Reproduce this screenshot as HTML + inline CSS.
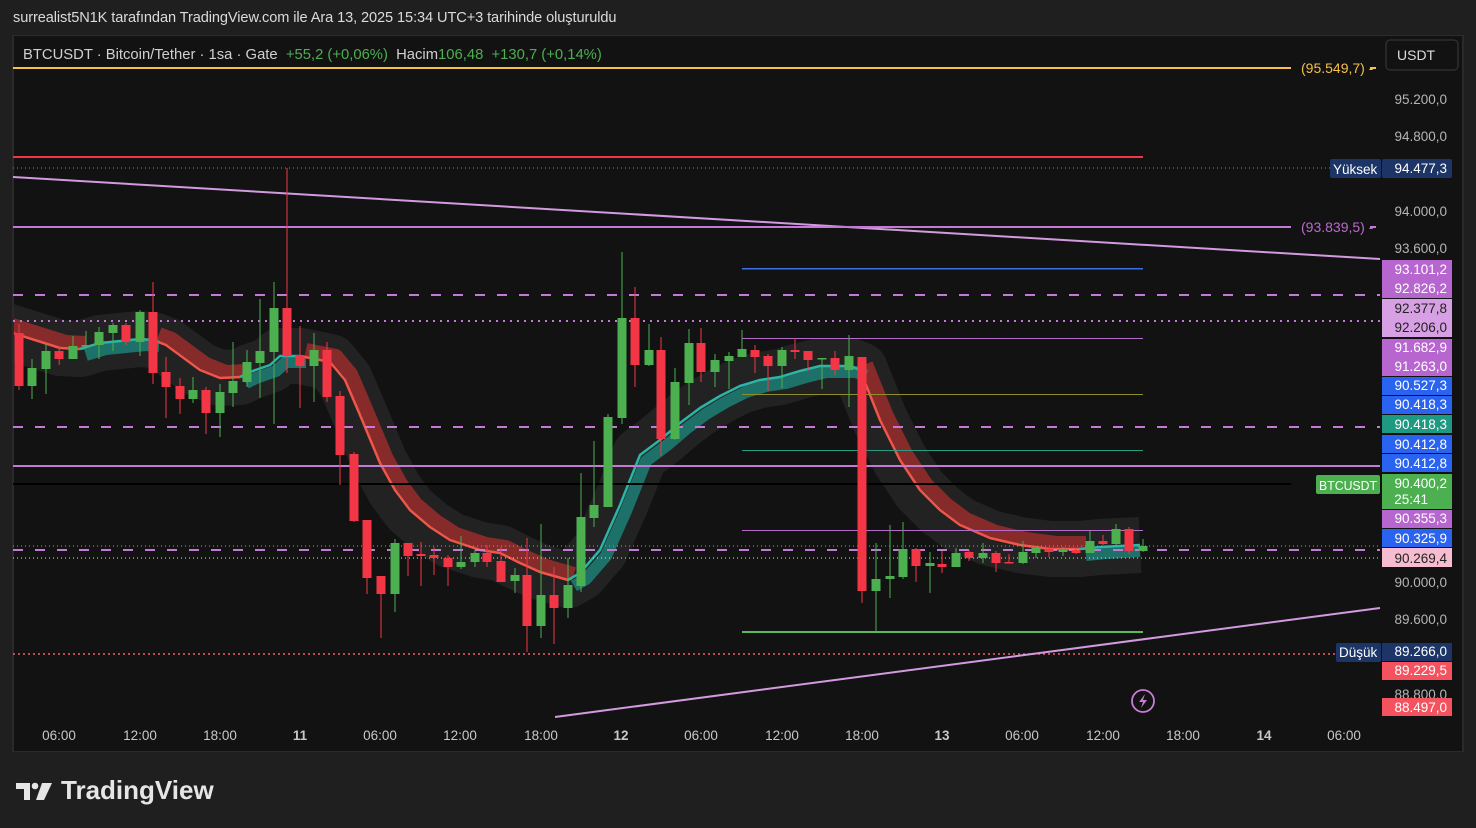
<!DOCTYPE html>
<html><head><meta charset="utf-8"><style>
html,body{margin:0;padding:0;background:#1f1f1f;width:1476px;height:828px;overflow:hidden;font-family:"Liberation Sans",sans-serif;}
.t{position:absolute;white-space:nowrap}
</style></head><body>
<div class="t" style="left:13px;top:10px;font-size:14.6px;color:#dbdbdb;letter-spacing:-0.1px">surrealist5N1K tarafından TradingView.com ile Ara 13, 2025 15:34 UTC+3 tarihinde oluşturuldu</div>
<svg width="1476" height="828" style="position:absolute;left:0;top:0" font-family="Liberation Sans, sans-serif">
<defs><clipPath id="cp"><rect x="14" y="36" width="1366" height="715"/></clipPath></defs>
<rect x="13" y="35" width="1450" height="717" fill="#121212"/>
<rect x="13" y="35" width="1450" height="1" fill="#2c2c2c"/>
<rect x="1462" y="35" width="2" height="717" fill="#2a2a2a"/>
<rect x="12" y="35" width="2" height="717" fill="#2a2a2a"/>
<rect x="13" y="751" width="1450" height="1" fill="#2a2a2a"/>
<g clip-path="url(#cp)">
<path d="M0 329 L60 348 L80 349 L100 343 L140 339 L153 340 L166 345 L200 370 L220 378 L240 377 L250 372 L270 365 L280 356 L300 356 L330 362 L345 380 L360 415 L380 463 L395 490 L410 510 L430 527 L450 540 L480 550 L500 553 L520 563 L540 572 L568 580 L580 573 L600 550 L620 505 L640 455 L660 440 L680 423 L700 408 L720 396 L740 386 L760 380 L780 377 L800 371 L820 366 L850 366 L860 370 L870 395 L880 420 L900 460 L920 490 L940 510 L960 525 L990 538 L1020 545 L1050 549 L1080 549 L1100 547 L1140 545" fill="none" stroke="rgba(255,255,255,0.07)" stroke-width="56" stroke-linejoin="round" stroke-linecap="butt"/>
<g fill="none" stroke="rgba(170,45,45,0.75)" stroke-width="14" stroke-linejoin="round" transform="translate(6,-6)">
<path d="M0 329 L60 348 L80 349"/>
<path d="M153 340 L166 345 L200 370 L220 378 L240 377"/>
<path d="M300 356 L330 362 L345 380 L360 415 L380 463 L395 490 L410 510 L430 527 L450 540 L480 550 L500 553 L520 563 L540 572 L568 580"/>
<path d="M860 370 L870 395 L880 420 L900 460 L920 490 L940 510 L960 525 L990 538 L1020 545 L1050 549 L1080 549"/>
</g>
<g fill="none" stroke="rgba(30,140,130,0.75)" stroke-width="12" stroke-linejoin="round" transform="translate(6,6)">
<path d="M80 349 L100 343 L140 339 L153 340"/>
<path d="M240 377 L250 372 L270 365 L280 356 L300 356"/>
<path d="M568 580 L580 573 L600 550 L620 505 L640 455 L660 440 L680 423 L700 408 L720 396 L740 386 L760 380 L780 377 L800 371 L820 366 L850 366 L860 370"/>
<path d="M1080 549 L1100 547 L1134 545"/>
</g>
<g fill="none" stroke-width="2.5" stroke-linejoin="round">
<path stroke="#f0554a" d="M0 329 L60 348 L80 349"/>
<path stroke="#2bb5a8" d="M80 349 L100 343 L140 339 L153 340"/>
<path stroke="#f0554a" d="M153 340 L166 345 L200 370 L220 378 L240 377"/>
<path stroke="#2bb5a8" d="M240 377 L250 372 L270 365 L280 356 L300 356"/>
<path stroke="#f0554a" d="M300 356 L330 362 L345 380 L360 415 L380 463 L395 490 L410 510 L430 527 L450 540 L480 550 L500 553 L520 563 L540 572 L568 580"/>
<path stroke="#2bb5a8" d="M568 580 L580 573 L600 550 L620 505 L640 455 L660 440 L680 423 L700 408 L720 396 L740 386 L760 380 L780 377 L800 371 L820 366 L850 366 L860 370"/>
<path stroke="#f0554a" d="M860 370 L870 395 L880 420 L900 460 L920 490 L940 510 L960 525 L990 538 L1020 545 L1050 549 L1080 549"/>
<path stroke="#2bb5a8" d="M1080 549 L1100 547 L1140 545"/>
</g>
</g>
<rect x="13" y="67" width="1278" height="2" fill="#f5c04a"/>
<rect x="1370" y="67" width="6" height="2" fill="#f5c04a"/>
<rect x="13" y="156" width="1130" height="2" fill="#f23645"/>
<line x1="13" y1="168" x2="1330" y2="168" stroke="#888" stroke-width="1" stroke-dasharray="1,3"/>
<line x1="13" y1="177" x2="1380" y2="259" stroke="#d49ae0" stroke-width="2"/>
<rect x="13" y="226" width="1278" height="2" fill="#c27ad6"/>
<rect x="1370" y="226" width="6" height="2" fill="#c27ad6"/>
<rect x="742" y="268" width="401" height="1.5" fill="#3b6fe0"/>
<line x1="13" y1="295" x2="1380" y2="295" stroke="#c27ad6" stroke-width="2" stroke-dasharray="10,12"/>
<line x1="13" y1="321" x2="1380" y2="321" stroke="#c27ad6" stroke-width="2" stroke-dasharray="2,5"/>
<rect x="742" y="338" width="401" height="1" fill="#b46cc8"/>
<rect x="742" y="394" width="401" height="1" fill="#8e8f2a"/>
<line x1="13" y1="427" x2="1380" y2="427" stroke="#c27ad6" stroke-width="2" stroke-dasharray="10,12"/>
<rect x="742" y="450" width="401" height="1" fill="#2a9a80"/>
<rect x="13" y="465" width="1367" height="2" fill="#c27ad6"/>
<rect x="13" y="483" width="1278" height="2" fill="#000"/>
<rect x="742" y="530" width="401" height="1" fill="#b46cc8"/>
<line x1="13" y1="546" x2="1380" y2="546" stroke="#6fbf5c" stroke-width="1" stroke-dasharray="1,3"/>
<line x1="13" y1="550" x2="1380" y2="550" stroke="#c27ad6" stroke-width="2" stroke-dasharray="10,12"/>
<line x1="13" y1="558" x2="1380" y2="558" stroke="#ddd" stroke-width="1" stroke-dasharray="1,3"/>
<rect x="742" y="631" width="401" height="2" fill="#5cb85c"/>
<line x1="13" y1="654" x2="1336" y2="654" stroke="#f25c6c" stroke-width="1.5" stroke-dasharray="2,3"/>
<line x1="555" y1="717" x2="1380" y2="608" stroke="#d49ae0" stroke-width="2"/>
<g id="c">
<g fill="#f23645">
<rect x="18.5" y="324" width="1" height="66"/><rect x="14.5" y="333" width="9" height="53"/>
<rect x="58.7" y="346" width="1" height="19"/><rect x="54.5" y="351" width="9" height="8"/>
<rect x="125.5" y="323" width="1" height="22"/><rect x="121.5" y="325" width="9" height="17"/>
<rect x="152.5" y="282" width="1" height="102"/><rect x="148.5" y="312" width="9" height="61"/>
<rect x="165.5" y="357" width="1" height="61"/><rect x="161.5" y="372" width="9" height="15"/>
<rect x="179.5" y="378" width="1" height="36"/><rect x="175.5" y="386" width="9" height="13"/>
<rect x="205.5" y="387" width="1" height="47"/><rect x="201.5" y="390" width="9" height="23"/>
<rect x="286.5" y="168" width="1" height="205"/><rect x="282.5" y="308" width="9" height="48"/>
<rect x="299.5" y="326" width="1" height="82"/><rect x="295.5" y="355" width="9" height="11"/>
<rect x="326.5" y="342" width="1" height="60"/><rect x="322.5" y="350" width="9" height="47"/>
<rect x="339.5" y="391" width="1" height="94"/><rect x="335.5" y="396" width="9" height="59"/>
<rect x="353.5" y="452" width="1" height="70"/><rect x="349.5" y="454" width="9" height="67"/>
<rect x="366.5" y="520" width="1" height="74"/><rect x="362.5" y="520" width="9" height="58"/>
<rect x="380.5" y="576" width="1" height="62"/><rect x="376.5" y="576" width="9" height="18"/>
<rect x="407.5" y="543" width="1" height="33"/><rect x="403.5" y="543" width="9" height="13"/>
<rect x="420.5" y="542" width="1" height="44"/><rect x="416.5" y="554" width="9" height="2"/>
<rect x="433.5" y="547" width="1" height="28"/><rect x="429.5" y="555" width="9" height="3"/>
<rect x="447.5" y="555" width="1" height="31"/><rect x="443.5" y="558" width="9" height="9"/>
<rect x="486.5" y="545" width="1" height="22"/><rect x="482.5" y="553" width="9" height="9"/>
<rect x="500.5" y="547" width="1" height="35"/><rect x="496.5" y="561" width="9" height="21"/>
<rect x="526.5" y="538" width="1" height="114"/><rect x="522.5" y="575" width="9" height="51"/>
<rect x="553.5" y="567" width="1" height="77"/><rect x="549.5" y="595" width="9" height="13"/>
<rect x="634.5" y="287" width="1" height="100"/><rect x="630.5" y="318" width="9" height="47"/>
<rect x="660.5" y="337" width="1" height="119"/><rect x="656.5" y="350" width="9" height="89"/>
<rect x="700.5" y="328" width="1" height="54"/><rect x="696.5" y="343" width="9" height="29"/>
<rect x="754.5" y="345" width="1" height="28"/><rect x="750.5" y="350" width="9" height="7"/>
<rect x="767.5" y="354" width="1" height="37"/><rect x="763.5" y="356" width="9" height="10"/>
<rect x="794.5" y="338" width="1" height="21"/><rect x="790.5" y="350" width="9" height="2"/>
<rect x="807.5" y="351" width="1" height="20"/><rect x="803.5" y="351" width="9" height="9"/>
<rect x="834.5" y="351" width="1" height="24"/><rect x="830.5" y="358" width="9" height="12"/>
<rect x="861.5" y="357" width="1" height="246"/><rect x="857.5" y="357" width="9" height="234"/>
<rect x="915.5" y="548" width="1" height="34"/><rect x="911.5" y="549" width="9" height="17"/>
<rect x="941.5" y="551" width="1" height="22"/><rect x="937.5" y="564" width="9" height="3"/>
<rect x="968.5" y="550" width="1" height="11"/><rect x="964.5" y="552" width="9" height="6"/>
<rect x="995.5" y="551" width="1" height="21"/><rect x="991.5" y="553" width="9" height="10"/>
<rect x="1008.5" y="554" width="1" height="9"/><rect x="1004.5" y="562" width="9" height="1.5"/>
<rect x="1048.5" y="547" width="1" height="10"/><rect x="1044.5" y="549" width="9" height="3"/>
<rect x="1075.5" y="548" width="1" height="6"/><rect x="1071.5" y="550" width="9" height="3"/>
<rect x="1102.5" y="535" width="1" height="10"/><rect x="1098.5" y="541" width="9" height="3"/>
<rect x="1128.5" y="527" width="1" height="27"/><rect x="1124.5" y="529" width="9" height="22"/>
</g>
<g fill="#4caf50">
<rect x="31.5" y="359" width="1" height="40"/><rect x="27.5" y="368" width="9" height="18"/>
<rect x="45.5" y="344" width="1" height="50"/><rect x="41.5" y="351" width="9" height="18"/>
<rect x="72.5" y="336" width="1" height="23"/><rect x="68.5" y="346" width="9" height="13"/>
<rect x="85.5" y="331" width="1" height="17"/><rect x="81.5" y="345" width="9" height="1.5"/>
<rect x="98.5" y="327" width="1" height="32"/><rect x="94.5" y="332" width="9" height="13"/>
<rect x="112.5" y="323" width="1" height="28"/><rect x="108.5" y="325" width="9" height="8"/>
<rect x="139.5" y="310" width="1" height="46"/><rect x="135.5" y="312" width="9" height="30"/>
<rect x="192.5" y="377" width="1" height="26"/><rect x="188.5" y="390" width="9" height="9"/>
<rect x="219.5" y="384" width="1" height="53"/><rect x="215.5" y="392" width="9" height="21"/>
<rect x="232.5" y="342" width="1" height="65"/><rect x="228.5" y="381" width="9" height="12"/>
<rect x="246.5" y="350" width="1" height="37"/><rect x="242.5" y="362" width="9" height="20"/>
<rect x="259.5" y="299" width="1" height="99"/><rect x="255.5" y="351" width="9" height="12"/>
<rect x="273.5" y="282" width="1" height="142"/><rect x="269.5" y="308" width="9" height="44"/>
<rect x="313.5" y="333" width="1" height="69"/><rect x="309.5" y="350" width="9" height="16"/>
<rect x="394.5" y="539" width="1" height="73"/><rect x="390.5" y="543" width="9" height="51"/>
<rect x="460.5" y="536" width="1" height="33"/><rect x="456.5" y="562" width="9" height="5"/>
<rect x="474.5" y="550" width="1" height="17"/><rect x="470.5" y="553" width="9" height="9"/>
<rect x="514.5" y="568" width="1" height="25"/><rect x="510.5" y="575" width="9" height="6"/>
<rect x="540.5" y="524" width="1" height="114"/><rect x="536.5" y="595" width="9" height="31"/>
<rect x="567.5" y="558" width="1" height="60"/><rect x="563.5" y="585" width="9" height="23"/>
<rect x="580.5" y="473" width="1" height="119"/><rect x="576.5" y="517" width="9" height="69"/>
<rect x="593.5" y="441" width="1" height="86"/><rect x="589.5" y="505" width="9" height="13"/>
<rect x="607.5" y="414" width="1" height="93"/><rect x="603.5" y="417" width="9" height="90"/>
<rect x="621.5" y="252" width="1" height="172"/><rect x="617.5" y="318" width="9" height="100"/>
<rect x="648.5" y="324" width="1" height="42"/><rect x="644.5" y="350" width="9" height="15"/>
<rect x="674.5" y="368" width="1" height="72"/><rect x="670.5" y="382" width="9" height="57"/>
<rect x="688.5" y="329" width="1" height="76"/><rect x="684.5" y="343" width="9" height="40"/>
<rect x="714.5" y="354" width="1" height="33"/><rect x="710.5" y="360" width="9" height="12"/>
<rect x="728.5" y="352" width="1" height="37"/><rect x="724.5" y="356" width="9" height="5"/>
<rect x="741.5" y="330" width="1" height="27"/><rect x="737.5" y="349" width="9" height="8"/>
<rect x="781.5" y="347" width="1" height="41"/><rect x="777.5" y="350" width="9" height="16"/>
<rect x="821.5" y="358" width="1" height="31"/><rect x="817.5" y="358" width="9" height="1.5"/>
<rect x="848.5" y="335" width="1" height="72"/><rect x="844.5" y="356" width="9" height="14"/>
<rect x="875.5" y="543" width="1" height="89"/><rect x="871.5" y="579" width="9" height="12"/>
<rect x="889.5" y="525" width="1" height="73"/><rect x="885.5" y="576" width="9" height="3"/>
<rect x="902.5" y="522" width="1" height="57"/><rect x="898.5" y="549" width="9" height="28"/>
<rect x="929.5" y="552" width="1" height="41"/><rect x="925.5" y="563" width="9" height="3"/>
<rect x="955.5" y="548" width="1" height="19"/><rect x="951.5" y="553" width="9" height="14"/>
<rect x="982.5" y="543" width="1" height="20"/><rect x="978.5" y="553" width="9" height="5"/>
<rect x="1022.5" y="541" width="1" height="23"/><rect x="1018.5" y="552" width="9" height="11"/>
<rect x="1035.5" y="546" width="1" height="12"/><rect x="1031.5" y="548" width="9" height="5"/>
<rect x="1062.5" y="547" width="1" height="9"/><rect x="1058.5" y="550" width="9" height="2"/>
<rect x="1089.5" y="531" width="1" height="22"/><rect x="1085.5" y="541" width="9" height="12"/>
<rect x="1115.5" y="524" width="1" height="21"/><rect x="1111.5" y="529" width="9" height="15"/>
<rect x="1142.5" y="539" width="1" height="13"/><rect x="1138.5" y="546" width="9" height="5"/>
</g>
</g>
<circle cx="1143" cy="701" r="11" fill="none" stroke="#c77dd8" stroke-width="1.8"/>
<path d="M1145 694 L1139 702 L1143 702 L1141 708 L1147 700 L1143 700 Z" fill="#c77dd8"/>
<g font-size="13.5" fill="#b5b5b5" text-anchor="end">
<text x="1447" y="104">95.200,0</text>
<text x="1447" y="141">94.800,0</text>
<text x="1447" y="216">94.000,0</text>
<text x="1447" y="253">93.600,0</text>
<text x="1447" y="587">90.000,0</text>
<text x="1447" y="624">89.600,0</text>
<text x="1447" y="699">88.800,0</text>
</g>
<text x="1301" y="73" font-size="14" fill="#f5c04a">(95.549,7) -</text>
<text x="1301" y="232" font-size="14" fill="#b86bcc">(93.839,5) -</text>
<rect x="1386" y="40" width="72" height="30" rx="4" fill="#121212" stroke="#3a3a3a"/>
<text x="1397" y="60" font-size="14" fill="#dcdcdc">USDT</text>
<rect x="1330" y="159" width="51" height="19" rx="2" fill="#1c3566"/>
<text x="1333" y="174" font-size="13.5" fill="#fff">Yüksek</text>
<rect x="1382" y="159" width="70" height="19" rx="2" fill="#1c3566"/>
<rect x="1382" y="260" width="70" height="38" fill="#b866cf"/>
<rect x="1382" y="299" width="70" height="38" fill="#d8a0e4"/>
<rect x="1382" y="339" width="70" height="37" fill="#b866cf"/>
<rect x="1382" y="377" width="70" height="18" fill="#2a63f0"/>
<rect x="1382" y="396" width="70" height="18" fill="#2a63f0"/>
<rect x="1382" y="415" width="70" height="18" fill="#1f9a82"/>
<rect x="1382" y="435" width="70" height="18" fill="#2a63f0"/>
<rect x="1382" y="454" width="70" height="18" fill="#2a63f0"/>
<rect x="1316" y="475" width="64" height="19" rx="2" fill="#4caf50"/>
<text x="1319" y="490" font-size="13" fill="#fff" textLength="58" lengthAdjust="spacingAndGlyphs">BTCUSDT</text>
<rect x="1382" y="474" width="70" height="35" fill="#4caf50"/>
<rect x="1382" y="510" width="70" height="18" fill="#b866cf"/>
<rect x="1382" y="529" width="70" height="18" fill="#2a63f0"/>
<rect x="1382" y="548" width="70" height="19" fill="#f7bccf"/>
<rect x="1336" y="643" width="45" height="19" rx="2" fill="#1c3566"/>
<text x="1339" y="657" font-size="13.5" fill="#fff">Düşük</text>
<rect x="1382" y="643" width="70" height="18" fill="#1c3566"/>
<rect x="1382" y="662" width="70" height="18" fill="#f4525f"/>
<rect x="1382" y="698" width="70" height="18" fill="#f4525f"/>
<g font-size="13.5" fill="#fff" text-anchor="end">
<text x="1447" y="173">94.477,3</text>
<text x="1447" y="274">93.101,2</text>
<text x="1447" y="293">92.826,2</text>
<text x="1447" y="352" >91.682,9</text>
<text x="1447" y="371">91.263,0</text>
<text x="1447" y="390">90.527,3</text>
<text x="1447" y="409">90.418,3</text>
<text x="1447" y="429">90.418,3</text>
<text x="1447" y="449">90.412,8</text>
<text x="1447" y="468">90.412,8</text>
<text x="1447" y="488">90.400,2</text>
<text x="1428" y="504">25:41</text>
<text x="1447" y="523">90.355,3</text>
<text x="1447" y="543">90.325,9</text>
<text x="1447" y="656">89.266,0</text>
<text x="1447" y="675">89.229,5</text>
<text x="1447" y="712">88.497,0</text>
</g>
<g font-size="13.5" fill="#222" text-anchor="end">
<text x="1447" y="313">92.377,8</text>
<text x="1447" y="332">92.206,0</text>
<text x="1447" y="563">90.269,4</text>
</g>
<g font-size="13.5" fill="#c8c8c8" text-anchor="middle">
<text x="59" y="740">06:00</text><text x="140" y="740">12:00</text><text x="220" y="740">18:00</text>
<text x="300" y="740" font-weight="bold">11</text><text x="380" y="740">06:00</text><text x="460" y="740">12:00</text>
<text x="541" y="740">18:00</text><text x="621" y="740" font-weight="bold">12</text><text x="701" y="740">06:00</text>
<text x="782" y="740">12:00</text><text x="862" y="740">18:00</text><text x="942" y="740" font-weight="bold">13</text>
<text x="1022" y="740">06:00</text><text x="1103" y="740">12:00</text><text x="1183" y="740">18:00</text>
<text x="1264" y="740" font-weight="bold">14</text><text x="1344" y="740">06:00</text>
</g>
<text x="23" y="59" font-size="14.8" fill="#d0d0d0" xml:space="preserve">BTCUSDT · Bitcoin/Tether · 1sa · Gate  <tspan fill="#4caf50">+55,2 (+0,06%)</tspan>  Hacim<tspan fill="#4caf50">106,48  +130,7 (+0,14%)</tspan></text>
<g fill="#e6e6e6">
<path d="M16 783 H30 V800 H24 V789 H16 Z"/>
<circle cx="35" cy="786" r="3.3"/>
<path d="M42 783 H52 L44 800 H36 Z"/>
</g>
<text x="61" y="799" font-size="26" font-weight="bold" fill="#e6e6e6">TradingView</text>
</svg>
</body></html>
